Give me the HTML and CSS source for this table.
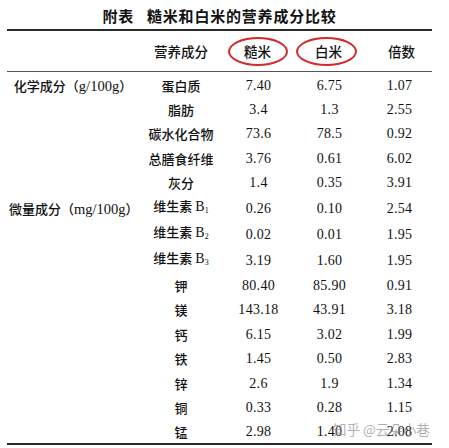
FILE: index.html
```html
<!DOCTYPE html>
<html lang="zh-CN">
<head>
<meta charset="utf-8">
<link rel="stylesheet" href="styles.css">
</head>
<body>
<div class="page">
  <h1 class="title"><span class="label">附表</span>糙米和白米的营养成分比较</h1>
  <table class="data">
    <colgroup>
      <col class="c1"><col class="c2"><col class="c3"><col class="c4"><col class="c5">
    </colgroup>
    <thead>
      <tr>
        <th></th>
        <th>营养成分</th>
        <th><span class="ring">糙米</span></th>
        <th><span class="ring">白米</span></th>
        <th>倍数</th>
      </tr>
    </thead>
    <tbody>
      <tr><td class="group">化学成分（<span class="lat">g/100g</span>）</td><td class="name">蛋白质</td><td>7.40</td><td>6.75</td><td>1.07</td></tr>
      <tr><td></td><td class="name">脂肪</td><td>3.4</td><td>1.3</td><td>2.55</td></tr>
      <tr><td></td><td class="name">碳水化合物</td><td>73.6</td><td>78.5</td><td>0.92</td></tr>
      <tr><td></td><td class="name">总膳食纤维</td><td>3.76</td><td>0.61</td><td>6.02</td></tr>
      <tr><td></td><td class="name">灰分</td><td>1.4</td><td>0.35</td><td>3.91</td></tr>
      <tr><td class="group">微量成分（<span class="lat">mg/100g</span>）</td><td class="name">维生素 <span class="lat">B<sub>1</sub></span></td><td>0.26</td><td>0.10</td><td>2.54</td></tr>
      <tr><td></td><td class="name">维生素 <span class="lat">B<sub>2</sub></span></td><td>0.02</td><td>0.01</td><td>1.95</td></tr>
      <tr><td></td><td class="name">维生素 <span class="lat">B<sub>3</sub></span></td><td>3.19</td><td>1.60</td><td>1.95</td></tr>
      <tr><td></td><td class="name">钾</td><td>80.40</td><td>85.90</td><td>0.91</td></tr>
      <tr><td></td><td class="name">镁</td><td>143.18</td><td>43.91</td><td>3.18</td></tr>
      <tr><td></td><td class="name">钙</td><td>6.15</td><td>3.02</td><td>1.99</td></tr>
      <tr><td></td><td class="name">铁</td><td>1.45</td><td>0.50</td><td>2.83</td></tr>
      <tr><td></td><td class="name">锌</td><td>2.6</td><td>1.9</td><td>1.34</td></tr>
      <tr><td></td><td class="name">铜</td><td>0.33</td><td>0.28</td><td>1.15</td></tr>
      <tr><td></td><td class="name">锰</td><td>2.98</td><td>1.40</td><td>2.08</td></tr>
    </tbody>
  </table>
  <div class="watermark">知乎 @云朵小巷</div>
</div>
</body>
</html>
```

FILE: styles.css
```css
html, body {
  margin: 0;
  padding: 0;
  background: #ffffff;
}

.page {
  position: relative;
  width: 449px;
  height: 448px;
  padding: 0 17px 0 7px;
  box-sizing: border-box;
  color: #111;
  font-family: "Liberation Serif", "Noto Sans CJK SC", serif;
}

.title {
  margin: 0;
  height: 29px;
  padding-top: 6px;
  box-sizing: border-box;
  text-align: center;
  font-family: "Noto Sans CJK SC", sans-serif;
  font-weight: 700;
  font-size: 15px;
  line-height: 20px;
  letter-spacing: 0.8px;
  color: #111;
}

.title .label {
  margin-right: 13px;
}

.data {
  width: 425px;
  table-layout: fixed;
  border-collapse: collapse;
  border-top: 2px solid #2a2a2a;
  border-bottom: 2px solid #2a2a2a;
}

.c1 { width: 130px; }
.c2 { width: 88px; }
.c3 { width: 67px; }
.c4 { width: 75px; }
.c5 { width: 65px; }

.data th {
  height: 40px;
  padding: 0;
  border-bottom: 1px solid #555;
  font-family: "Noto Sans CJK SC", sans-serif;
  font-weight: 500;
  font-size: 13.5px;
  text-align: center;
  vertical-align: middle;
  color: #111;
}

.data th:last-child {
  padding-left: 4px;
}

.ring {
  display: inline-block;
  width: 56px;
  height: 25px;
  line-height: 25px;
  border: 2px solid #d42a2c;
  border-radius: 50%;
  margin-left: -2px;
}

.data th:nth-child(4) .ring {
  width: 57px;
  margin-left: -6px;
  text-indent: 4px;
}

.data td {
  height: 24.5px;
  padding: 3px 0 0;
  box-sizing: border-box;
  text-align: center;
  vertical-align: middle;
  font-size: 14px;
  line-height: 18px;
  letter-spacing: 0.3px;
  white-space: nowrap;
}

.data td.group,
.data td.name {
  font-family: "Noto Sans CJK SC", serif;
  font-weight: 500;
  font-size: 13px;
  letter-spacing: 0;
}

.data td.group {
  text-align: center;
  padding-left: 2px;
}

.lat {
  font-family: "Liberation Serif", serif;
  font-weight: 400;
  font-size: 14px;
}

.group .lat {
  font-size: 14.5px;
}

.lat sub {
  font-size: 8px;
  vertical-align: -2px;
}

.watermark {
  position: absolute;
  left: 333px;
  top: 420px;
  font-family: "Noto Sans CJK SC", sans-serif;
  font-size: 13.5px;
  line-height: 18px;
  color: rgba(140, 140, 140, 0.7);
  white-space: nowrap;
}
```
